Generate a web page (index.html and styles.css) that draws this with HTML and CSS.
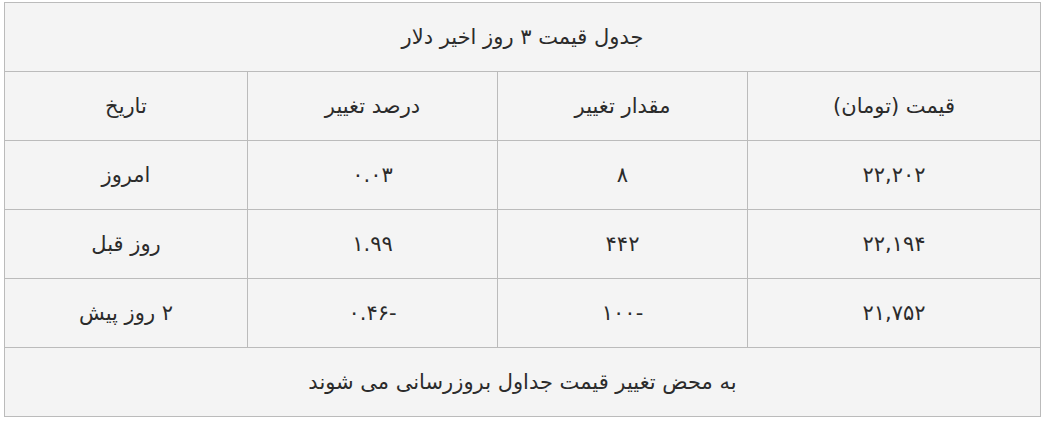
FILE: index.html
```html
<!DOCTYPE html>
<html lang="fa" dir="rtl">
<head>
<meta charset="utf-8">
<link rel="stylesheet" href="styles.css">
</head>
<body>
<div class="wrap">
<table class="prices">
<colgroup>
<col class="c-price"><col class="c-change"><col class="c-pct"><col class="c-date">
</colgroup>
<tr><td colspan="4">جدول قیمت ۳ روز اخیر دلار</td></tr>
<tr><td>قیمت (تومان)</td><td>مقدار تغییر</td><td>درصد تغییر</td><td>تاریخ</td></tr>
<tr><td>۲۲,۲۰۲</td><td>۸</td><td>۰.۰۳</td><td>امروز</td></tr>
<tr><td>۲۲,۱۹۴</td><td>۴۴۲</td><td>۱.۹۹</td><td>روز قبل</td></tr>
<tr><td>۲۱,۷۵۲</td><td>-۱۰۰</td><td>-۰.۴۶</td><td>۲ روز پیش</td></tr>
<tr><td colspan="4">به محض تغییر قیمت جداول بروزرسانی می شوند</td></tr>
</table>
</div>
</body>
</html>
```
FILE: styles.css
```css
html, body { margin: 0; padding: 0; background: #fff; }
.wrap { padding: 2px 6px 0 4px; }
.prices {
  width: 1037px;
  border-collapse: collapse;
  table-layout: fixed;
  background: #f4f4f4;
  font-family: "DejaVu Sans", sans-serif;
  font-size: 21px;
  color: #2b2b2b;
}
.c-price { width: 293px; }
.c-change { width: 250px; }
.c-pct { width: 250px; }
.c-date { width: 243px; }
.prices td {
  border: 1px solid #bbb;
  height: 69px;
  padding: 0;
  text-align: center;
  vertical-align: middle;
  box-sizing: border-box;
}
```
